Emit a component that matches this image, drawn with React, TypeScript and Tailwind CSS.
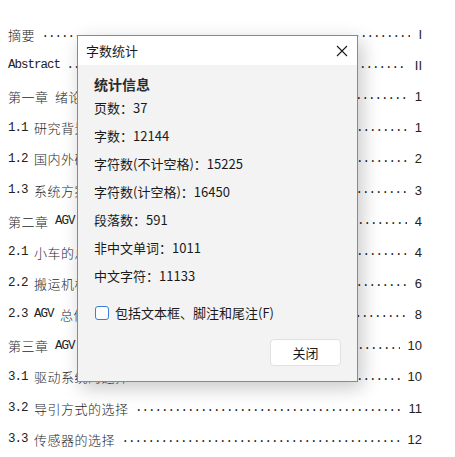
import React from 'react';

const cjk = '"Noto Sans CJK SC", "Noto Sans", sans-serif';

const toc: { title: string; page: string }[] = [
  { title: '摘要', page: 'I' },
  { title: 'Abstract', page: 'II' },
  { title: '第一章 绪论', page: '1' },
  { title: '1.1 研究背景及意义', page: '1' },
  { title: '1.2 国内外研究现状', page: '2' },
  { title: '1.3 系统方案设计', page: '3' },
  { title: '第二章 AGV 机械结构设计', page: '4' },
  { title: '2.1 小车的总体结构', page: '4' },
  { title: '2.2 搬运机构设计', page: '6' },
  { title: '2.3 AGV 总体尺寸', page: '8' },
  { title: '第三章 AGV 控制系统设计', page: '10' },
  { title: '3.1 驱动系统的选择', page: '10' },
  { title: '3.2 导引方式的选择', page: '11' },
  { title: '3.3 传感器的选择', page: '12' },
];

const stats: [string, string][] = [
  ['页数', '37'],
  ['字数', '12144'],
  ['字符数(不计空格)', '15225'],
  ['字符数(计空格)', '16450'],
  ['段落数', '591'],
  ['非中文单词', '1011'],
  ['中文字符', '11133'],
];

// split a title into CJK and latin runs so latin gets half-width mono
function Mixed({ text }: { text: string }) {
  const parts = text.split(/([\u4e00-\u9fff]+)/).filter(Boolean);
  return (
    <>
      {parts.map((p, i) =>
        /[\u4e00-\u9fff]/.test(p) ? (
          <span key={i} className="text-[13px] font-light tracking-[0.5px] text-[#2a2a2a] font-['Noto_Sans_CJK_SC',sans-serif]">
            {p}
          </span>
        ) : (
          <span key={i} className="text-[12.5px] tracking-[-1px] whitespace-pre font-['Liberation_Mono',monospace]">
            {p}
          </span>
        )
      )}
    </>
  );
}

export default function App() {
  return (
    <div className="relative w-[455px] h-[457px] overflow-hidden bg-white text-[#222]">
      {/* document table of contents */}
      <div className="pt-[19px] pl-[8px] pr-[33px]">
        {toc.map((row, i) => (
          <div key={i} className="flex items-center h-[31.15px] whitespace-nowrap">
            <Mixed text={row.title} />
            <span className="flex-1 overflow-hidden text-[12.5px] tracking-[-1px] font-['Liberation_Mono',monospace] whitespace-pre">
              {' ' + '.'.repeat(80)}
            </span>
            <span className="pl-[8px] text-[13px] font-['Liberation_Sans',sans-serif]">{row.page}</span>
          </div>
        ))}
      </div>

      {/* word count dialog */}
      <div
        className="absolute left-[77px] top-[35px] w-[281px] h-[347px] flex flex-col border border-[#8a8a8a] bg-[#f3f3f3] shadow-[4px_6px_18px_rgba(0,0,0,0.22)]"
        style={{ fontFamily: cjk }}
      >
        <div className="h-[29px] bg-white flex items-center justify-between pl-[8px] pr-[9px]">
          <span className="text-[13px] text-[#1a1a1a]">字数统计</span>
          <svg width="12" height="12" viewBox="0 0 12 12" className="text-[#1a1a1a]">
            <path d="M1 1 L11 11 M11 1 L1 11" stroke="currentColor" strokeWidth="1.1" fill="none" />
          </svg>
        </div>

        <div className="flex-1 flex flex-col pl-[16px] pr-[16px] pt-[9px]">
          <div className="text-[14px] font-bold leading-[20px] text-[#2b2b2b]">统计信息</div>
          {stats.map(([label, value]) => (
            <div key={label} className="h-[28px] flex items-center text-[13px] text-[#1a1a1a]">
              {label}：{value}
            </div>
          ))}

          <label className="mt-[13px] h-[20px] flex items-center gap-[6px] text-[13px] text-[#1a1a1a]">
            <span className="ml-[1px] w-[14px] h-[14px] rounded-[3px] border-[1.5px] border-[#3b7ddd] bg-white" />
            包括文本框、脚注和尾注(F)
          </label>

          <div className="mt-[16px] flex justify-end">
            <button className="w-[71px] h-[27px] rounded-[4px] border border-[#e1e1e1] bg-white text-[13px] text-[#1a1a1a]">
              关闭
            </button>
          </div>
        </div>
      </div>
    </div>
  );
}
